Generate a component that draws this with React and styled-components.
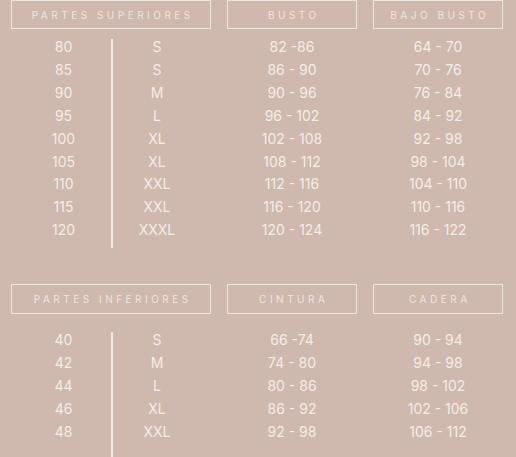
import React from "react";
import styled, { createGlobalStyle } from "styled-components";

const GlobalStyle = createGlobalStyle`
  html, body { margin: 0; padding: 0; background: #cfb8ad; }
  body { font-family: Inter, "Noto Sans", sans-serif; overflow: hidden; }
`;

const Page = styled.div`
  width: 516px;
  height: 457px;
  box-sizing: border-box;
  padding-left: 11px;
  background: #cfb8ad;
  overflow: hidden;
`;

const Section = styled.section`
  display: flex;
  flex-direction: column;
  margin-top: ${(p) => p.$top}px;
`;

const Grid = styled.div`
  display: grid;
  grid-template-columns: 200px 130px 130px;
  column-gap: 16px;
`;

const HeaderBox = styled.div`
  box-sizing: border-box;
  height: ${(p) => p.$h}px;
  border: 1.5px solid rgba(244, 236, 229, 0.85);
  display: flex;
  align-items: center;
  justify-content: center;
  padding-left: 3.5px;
  font-size: 10px;
  letter-spacing: 3.5px;
  color: #efe6de;
  text-transform: uppercase;
  white-space: nowrap;
`;

const Body = styled(Grid)`
  margin-top: ${(p) => p.$gap}px;
  align-items: start;
`;

const Split = styled.div`
  display: flex;
  align-items: flex-start;
`;

const Column = styled.div`
  display: flex;
  flex-direction: column;
  align-items: center;
  font-size: 14px;
  line-height: 22.9px;
  color: #f4ede7;
  box-sizing: border-box;
  width: ${(p) => (p.$width ? `${p.$width}px` : "auto")};
  flex: ${(p) => (p.$grow ? 1 : "none")};
  padding-left: ${(p) => p.$pl || 0}px;
  padding-right: ${(p) => p.$pr || 0}px;
`;

const Divider = styled.div`
  width: 2px;
  flex: none;
  margin-top: ${(p) => p.$offset}px;
  height: ${(p) => p.$length}px;
  background: rgba(246, 239, 233, 0.9);
`;

const Cell = styled.span`
  white-space: pre;
`;

const sections = [
  {
    top: 0,
    headerH: 29,
    gap: 7,
    headers: ["Partes superiores", "Busto", "Bajo busto"],
    nums: ["80", "85", "90", "95", "100", "105", "110", "115", "120"],
    sizes: ["S", "S", "M", "L", "XL", "XL", "XXL", "XXL", "XXXL"],
    a: ["82 -86", "86 - 90", "90 - 96", "96 - 102", "102 - 108", "108 - 112", "112 - 116", "116 - 120", "120 - 124"],
    b: ["64 - 70", "70 - 76", "76 - 84", "84 - 92", "92 - 98", "98 - 104", "104 - 110", "110 - 116", "116 - 122"],
    divOffset: 3.4,
    divLength: 209,
  },
  {
    top: 35.7,
    headerH: 30,
    gap: 15,
    headers: ["Partes inferiores", "Cintura", "Cadera"],
    nums: ["40", "42", "44", "46", "48"],
    sizes: ["S", "M", "L", "XL", "XXL"],
    a: ["66 -74", "74 - 80", "80 - 86", "86 - 92", "92 - 98"],
    b: ["90 - 94", "94 - 98", "98 - 102", "102 - 106", "106 - 112"],
    divOffset: 2.6,
    divLength: 140,
  },
];

function SizeSection({ s }) {
  return (
    <Section $top={s.top}>
      <Grid>
        {s.headers.map((h) => (
          <HeaderBox key={h} $h={s.headerH}>{h}</HeaderBox>
        ))}
      </Grid>
      <Body $gap={s.gap}>
        <Split>
          <Column $width={100} $pl={5}>
            {s.nums.map((n, i) => (
              <Cell key={i}>{n}</Cell>
            ))}
          </Column>
          <Divider $offset={s.divOffset} $length={s.divLength} />
          <Column $grow $pr={10}>
            {s.sizes.map((n, i) => (
              <Cell key={i}>{n}</Cell>
            ))}
          </Column>
        </Split>
        <Column>
          {s.a.map((n, i) => (
            <Cell key={i}>{n}</Cell>
          ))}
        </Column>
        <Column>
          {s.b.map((n, i) => (
            <Cell key={i}>{n}</Cell>
          ))}
        </Column>
      </Body>
    </Section>
  );
}

export default function App() {
  return (
    <>
      <GlobalStyle />
      <Page>
        {sections.map((s, i) => (
          <SizeSection key={i} s={s} />
        ))}
      </Page>
    </>
  );
}
